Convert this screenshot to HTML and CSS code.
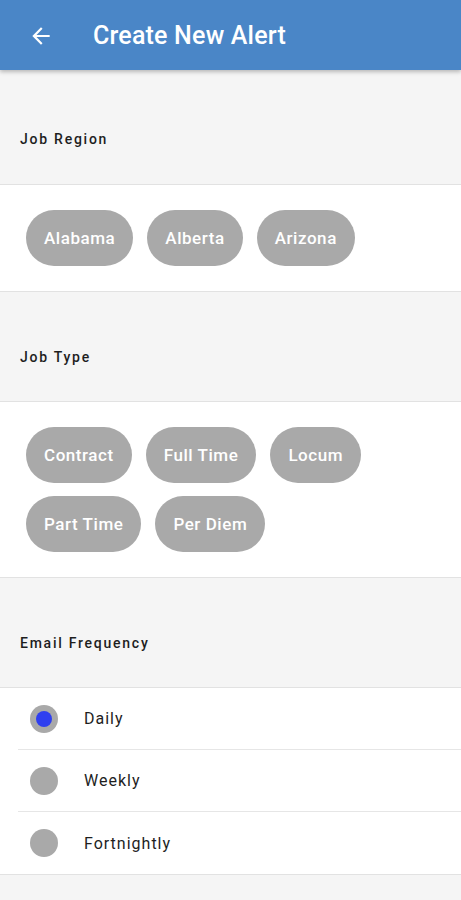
FILE: index.html
```html
<!DOCTYPE html>
<html>
<head>
<meta charset="utf-8">
<link rel="stylesheet" href="styles.css">
</head>
<body>
<header class="appbar">
  <svg class="back" viewBox="0 0 24 24" width="26" height="26"><path d="M20 11H7.83l5.59-5.59L12 4l-8 8 8 8 1.41-1.41L7.83 13H20v-2z" fill="#fff"/></svg>
  <h1 class="title">Create New Alert</h1>
</header>
<main class="content">
  <div class="section-head first">Job Region</div>
  <div class="chips">
    <span class="chip">Alabama</span>
    <span class="chip">Alberta</span>
    <span class="chip">Arizona</span>
  </div>
  <div class="section-head">Job Type</div>
  <div class="chips">
    <span class="chip">Contract</span>
    <span class="chip">Full Time</span>
    <span class="chip">Locum</span>
    <span class="chip">Part Time</span>
    <span class="chip">Per Diem</span>
  </div>
  <div class="section-head">Email Frequency</div>
  <div class="radios">
    <div class="radio-row"><span class="radio checked"></span><span class="radio-label">Daily</span></div>
    <div class="radio-row"><span class="radio"></span><span class="radio-label">Weekly</span></div>
    <div class="radio-row"><span class="radio"></span><span class="radio-label">Fortnightly</span></div>
  </div>
</main>
</body>
</html>
```
FILE: styles.css
```css
* { box-sizing: border-box; }
html, body { margin: 0; padding: 0; }
body {
  background: #f5f5f5;
  font-family: Roboto, "Noto Sans", sans-serif;
  width: 461px;
  height: 900px;
  overflow: hidden;
}
.appbar {
  position: relative;
  z-index: 2;
  height: 70px;
  background: #4a86c7;
  display: flex;
  align-items: center;
  padding-left: 28px;
  box-shadow: 0 2px 4px rgba(0,0,0,0.25);
}
.back { display: block; margin-top: 2px; }
.title {
  margin: 0 0 0 39px;
  color: #fff;
  font-size: 25px;
  font-weight: 500;
  letter-spacing: 0.2px;
}
.section-head {
  background: #f5f5f5;
  height: 110px;
  padding: 55px 20px 0;
  font-size: 14px;
  line-height: 20px;
  font-weight: 500;
  letter-spacing: 1.75px;
  color: #1e1e1e;
  border-bottom: 1px solid #e2e2e2;
}
.section-head.first { height: 115px; padding-top: 59px; }
.chips {
  background: #fff;
  display: flex;
  flex-wrap: wrap;
  gap: 13px 14px;
  padding: 25px 26px;
  border-bottom: 1px solid #e2e2e2;
}
.chip {
  height: 56px;
  line-height: 56px;
  padding: 0 18px;
  border-radius: 28px;
  background: #a9a9a9;
  color: #fff;
  font-size: 17px;
  font-weight: 500;
  letter-spacing: 0.55px;
}
.radios {
  background: #fff;
  border-bottom: 1px solid #e2e2e2;
}
.radio-row {
  height: 62px;
  display: flex;
  align-items: center;
  margin-left: 18px;
  padding-left: 12px;
  border-bottom: 1px solid #e6e6e6;
}
.radio-row:last-child { border-bottom: none; }
.radio {
  width: 28px;
  height: 28px;
  border-radius: 50%;
  background: #a9a9a9;
  flex: none;
  display: flex;
  align-items: center;
  justify-content: center;
}
.radio.checked::after {
  content: "";
  width: 16px;
  height: 16px;
  border-radius: 50%;
  background: #2f3ff0;
}
.radio-label {
  margin-left: 26px;
  font-size: 16px;
  color: #1e1e1e;
  letter-spacing: 1px;
  font-weight: 400;
}
```
